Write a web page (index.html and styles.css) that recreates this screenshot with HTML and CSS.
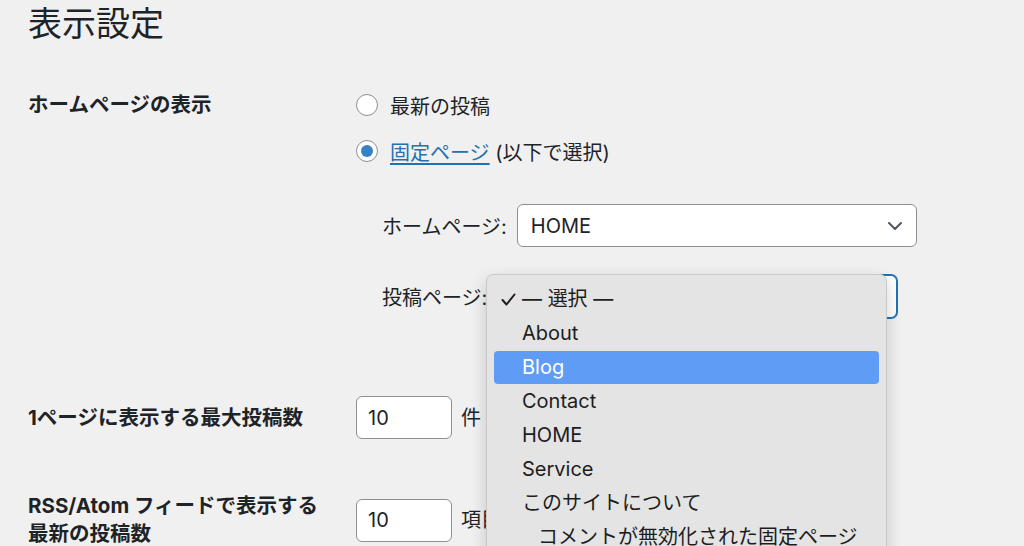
FILE: index.html
```html
<!DOCTYPE html>
<html lang="ja">
  <head>
    <meta charset="UTF-8" />
    <title>表示設定</title>
    <link rel="stylesheet" href="styles.css">
  </head>
  <body>
    <div class="wrap">
      <h1>表示設定</h1>

      <!-- 設定テーブル -->
      <div class="form-table">
        <!-- ホームページの表示 -->
        <div class="row row-front">
          <div class="th">ホームページの表示</div>
          <div class="td">
            <label class="radio"><span class="dot"></span>最新の投稿</label>
            <label class="radio"><span class="dot checked"></span><a href="#">固定ページ</a>&nbsp;(以下で選択)</label>
            <ul class="front-pages">
              <li>
                <span class="sel-label">ホームページ:</span>
                <span class="select">HOME
                  <svg class="chev" width="14" height="8" viewBox="0 0 14 8"><path d="M1 1l6 6 6-6" fill="none" stroke="#50575e" stroke-width="2" stroke-linecap="round" stroke-linejoin="round"/></svg>
                </span>
              </li>
              <li>
                <span class="sel-label">投稿ページ:</span>
                <!-- 선택값은 팝업에 가려짐 -->
                <span class="select focus"></span>
              </li>
            </ul>
          </div>
        </div>

        <!-- 最大投稿数 -->
        <div class="row row-num">
          <div class="th">1ページに表示する最大投稿数</div>
          <div class="td">
            <span class="num">10</span><span class="unit">件</span>
          </div>
        </div>

        <!-- RSS -->
        <div class="row row-num row-rss">
          <div class="th">RSS/Atom フィードで表示する<br>最新の投稿数</div>
          <div class="td">
            <span class="num">10</span><span class="unit">項目</span>
          </div>
        </div>
      </div>

      <!-- 投稿ページのドロップダウン（開いた状態） -->
      <ul class="popup">
        <li class="on"><svg class="check" width="15" height="13" viewBox="0 0 15 13"><path d="M1.5 7l4 4.5 8-10" fill="none" stroke="#1d1d1d" stroke-width="2" stroke-linecap="round" stroke-linejoin="round"/></svg>— 選択 —</li>
        <li>About</li>
        <li class="hl">Blog</li>
        <li>Contact</li>
        <li>HOME</li>
        <li>Service</li>
        <li>このサイトについて</li>
        <li class="sub">コメントが無効化された固定ページ</li>
      </ul>
    </div>
  </body>
</html>
```

FILE: styles.css
```css
/* 초기화 */
html,
body,
ul {
  margin: 0;
  padding: 0;
}
html {
  overflow: hidden;
}
ul {
  list-style: none;
}

body {
  background-color: #f0f0f1;
  color: #1d2327;
  font-family: Inter, "Noto Sans CJK JP", sans-serif;
  font-size: 20px;
}

/* 전체 박스 */
.wrap {
  position: relative; /* popup 기준 */
  height: 546px;
  overflow: hidden;
  padding-left: 28px;
}

h1 {
  margin: 0;
  padding-top: 2px;
  font-size: 34px;
  font-weight: 400;
  line-height: 44px;
}

/* 테이블 */
.form-table {
  margin-top: 36px;
}
.row {
  display: flex;
}
.th {
  width: 312px;
  margin-right: 16px;
  font-size: 20.5px;
  font-weight: 700;
  line-height: 46px;
}
.row-num {
  margin-top: 78px;
  align-items: center;
}
.row-num .th {
  line-height: 43px;
}
.row-rss {
  margin-top: 53px;
}
.row-rss .th {
  line-height: 28px;
}

/* 라디오 */
.radio {
  display: flex;
  align-items: center;
  height: 46px;
}
.dot {
  box-sizing: border-box;
  display: flex;
  align-items: center;
  justify-content: center;
  width: 22px;
  height: 22px;
  margin-right: 12px;
  border: 1.5px solid #8c8f94;
  border-radius: 50%;
  background-color: #fff;
}
.dot.checked::before {
  content: '';
  width: 12px;
  height: 12px;
  border-radius: 50%;
  background-color: #3582c4;
}
.radio a {
  color: #2271b1;
  text-decoration: underline;
  text-underline-offset: 3px;
}

/* 셀렉트 */
.front-pages {
  margin-top: 30px;
  padding-left: 26px;
}
.front-pages li {
  display: flex;
  align-items: center;
  height: 43px;
}
.front-pages li + li {
  margin-top: 28px;
}
.sel-label {
  margin-right: 10px;
}
.select {
  box-sizing: border-box;
  position: relative;
  display: flex;
  align-items: center;
  width: 400px;
  height: 43px;
  padding-left: 13px;
  border: 1.5px solid #8c8f94;
  border-radius: 6px;
  background-color: #fff;
}
.select.focus {
  border-color: #2271b1;
  box-shadow: 0 0 0 1px #2271b1;
}
.chev {
  position: absolute;
  right: 14px;
  top: 17px;
}

/* 숫자 입력 */
.num {
  box-sizing: border-box;
  display: inline-flex;
  align-items: center;
  width: 96px;
  height: 43px;
  padding-left: 11px;
  border: 1.5px solid #8c8f94;
  border-radius: 6px;
  background-color: #fff;
}
.unit {
  margin-left: 9px;
}

/* 드롭다운 팝업 */
.popup {
  position: absolute;
  left: 486px;
  top: 274px;
  box-sizing: border-box;
  width: 401px;
  height: 300px;
  padding: 8px 7px;
  border: 1px solid #c9c9c9;
  border-radius: 7px;
  background-color: #e4e4e4;
  box-shadow: 0 6px 16px rgba(0, 0, 0, 0.18);
  color: #1d1d1d;
}
.popup li {
  position: relative;
  height: 33px;
  margin-bottom: 1px;
  padding-left: 28px;
  line-height: 33px;
  border-radius: 4px;
}
.popup .hl {
  background-color: #5f9cf6;
  color: #fff;
}
.popup .sub {
  padding-left: 44px;
}
.check {
  position: absolute;
  left: 7px;
  top: 10px;
}
```
